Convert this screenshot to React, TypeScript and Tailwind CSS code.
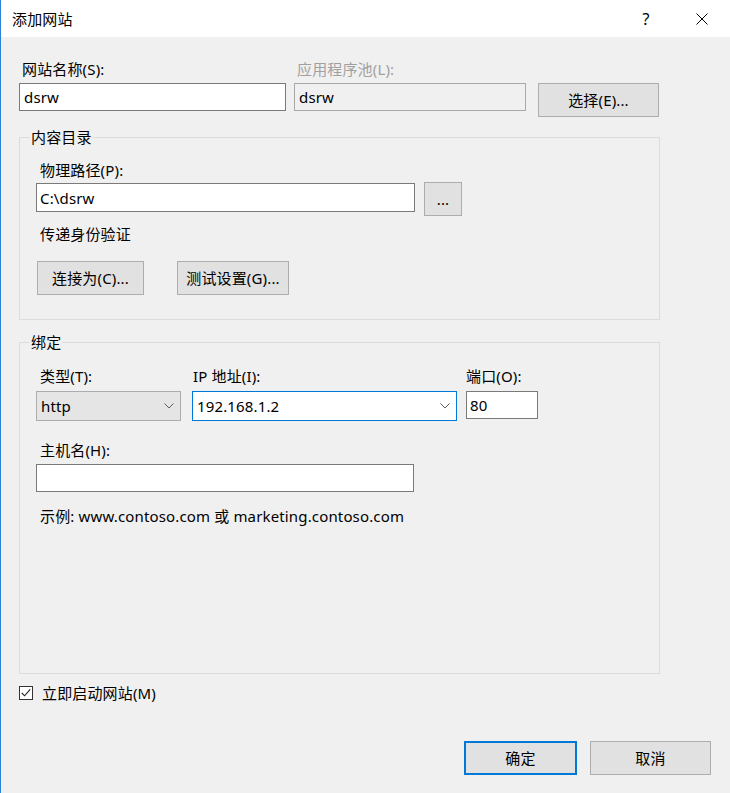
import React from "react";

function Chevron() {
  return (
    <svg width="10" height="6" viewBox="0 0 10 6" className="block">
      <path d="M0.5 0.5 L5 5 L9.5 0.5" fill="none" stroke="#606060" strokeWidth="1" />
    </svg>
  );
}

function Btn({ children, className = "" }: { children: React.ReactNode; className?: string }) {
  return (
    <div
      className={
        "h-[34px] flex items-center justify-center bg-[#e1e1e1] border border-[#adadad] text-black " +
        className
      }
    >
      {children}
    </div>
  );
}

export default function App() {
  return (
    <div className="w-[730px] h-[793px] border-l border-[#2a82d6] bg-[#f0f0f0] flex flex-col text-[15px] text-black font-['Noto_Sans','Noto_Sans_CJK_SC',sans-serif] leading-[20px] tracking-[0.15px] overflow-hidden">
      {/* title bar */}
      <div className="h-[37px] bg-white flex items-center shrink-0">
        <div className="pl-[11px] flex-1">添加网站</div>
        <div className="w-[20px] text-center mr-[36px] text-[16px]">?</div>
        <div className="w-[20px] flex items-center justify-center mr-[18px]">
          <svg width="12" height="12" viewBox="0 0 12 12">
            <path d="M0.5 0.5 L11.5 11.5 M11.5 0.5 L0.5 11.5" stroke="#000" strokeWidth="1" />
          </svg>
        </div>
      </div>

      {/* body */}
      <div className="pl-[18px] pt-[22px] flex flex-col">
        {/* row 1 */}
        <div className="flex items-start">
          <div className="w-[267px] flex flex-col">
            <div className="pl-[3px] h-[20px]">网站名称(S):</div>
            <div className="mt-[4px] h-[28px] bg-white border border-[#7a7a7a] flex items-center pl-[4px]">dsrw</div>
          </div>
          <div className="ml-[8px] w-[232px] flex flex-col">
            <div className="pl-[3px] h-[20px] text-[#a0a0a0]">应用程序池(L):</div>
            <div className="mt-[4px] h-[28px] bg-[#f0f0f0] border border-[#a8a8a8] flex items-center pl-[4px]">dsrw</div>
          </div>
          <Btn className="ml-[12px] mt-[24px] w-[121px]">选择(E)...</Btn>
        </div>

        {/* group 1 */}
        <fieldset className="mt-[10px] w-[641px] border border-[#dcdcdc]">
          <legend className="ml-[10px] px-[1px] leading-[20px]">内容目录</legend>
          <div className="pl-[16px] pb-[24px] flex flex-col">
            <div className="mt-[13px] pl-[4px] h-[20px]">物理路径(P):</div>
            <div className="mt-[2px] flex items-start">
              <div className="mt-[1px] w-[379px] h-[29px] bg-white border border-[#7a7a7a] flex items-center pl-[3px]">
                C:\dsrw
              </div>
              <Btn className="ml-[9px] w-[38px]">...</Btn>
            </div>
            <div className="mt-[8px] pl-[4px] h-[20px]">传递身份验证</div>
            <div className="mt-[17px] flex items-start">
              <Btn className="ml-[1px] w-[107px]">连接为(C)...</Btn>
              <Btn className="ml-[33px] w-[112px]">测试设置(G)...</Btn>
            </div>
          </div>
        </fieldset>

        {/* group 2 */}
        <fieldset className="mt-[12px] w-[641px] h-[342px] border border-[#dcdcdc]">
          <legend className="ml-[10px] px-[1px] leading-[20px]">绑定</legend>
          <div className="pl-[16px] flex flex-col">
            <div className="mt-[14px] flex items-start">
              <div className="w-[145px] flex flex-col">
                <div className="pl-[4px] h-[20px]">类型(T):</div>
                <div className="mt-[5px] h-[30px] bg-[#e5e5e5] border border-[#acacac] flex items-center pl-[4px] pr-[6px]">
                  <span className="flex-1">http</span>
                  <Chevron />
                </div>
              </div>
              <div className="ml-[11px] w-[265px] flex flex-col">
                <div className="pl-[1px] h-[20px]">IP 地址(I):</div>
                <div className="mt-[5px] h-[30px] bg-white border border-[#0078d7] flex items-center pl-[4px] pr-[6px]">
                  <span className="flex-1">192.168.1.2</span>
                  <Chevron />
                </div>
              </div>
              <div className="ml-[9px] w-[72px] flex flex-col">
                <div className="h-[20px]">端口(O):</div>
                <div className="mt-[5px] h-[28px] bg-white border border-[#7a7a7a] flex items-center pl-[3px]">80</div>
              </div>
            </div>
            <div className="mt-[19px] pl-[4px] h-[20px]">主机名(H):</div>
            <div className="mt-[4px] w-[378px] h-[28px] bg-white border border-[#7a7a7a]"></div>
            <div className="mt-[14px] pl-[4px] h-[20px]">示例: www.contoso.com 或 marketing.contoso.com</div>
          </div>
        </fieldset>

        {/* checkbox */}
        <div className="mt-[9px] h-[20px] flex items-center">
          <svg width="14" height="14" viewBox="0 0 14 14" className="block">
            <rect x="0.5" y="0.5" width="13" height="13" fill="#fff" stroke="#333" strokeWidth="1" />
            <path d="M2.8 7 L5.6 9.8 L11.2 3.4" fill="none" stroke="#222" strokeWidth="1.1" />
          </svg>
          <span className="ml-[9px]">立即启动网站(M)</span>
        </div>

        {/* buttons */}
        <div className="mt-[38px] flex justify-end pr-[19px]">
          <div className="w-[113px] h-[34px] flex items-center justify-center bg-[#e1e1e1] border-2 border-[#0078d7]">确定</div>
          <Btn className="ml-[13px] w-[121px]">取消</Btn>
        </div>
      </div>
    </div>
  );
}
